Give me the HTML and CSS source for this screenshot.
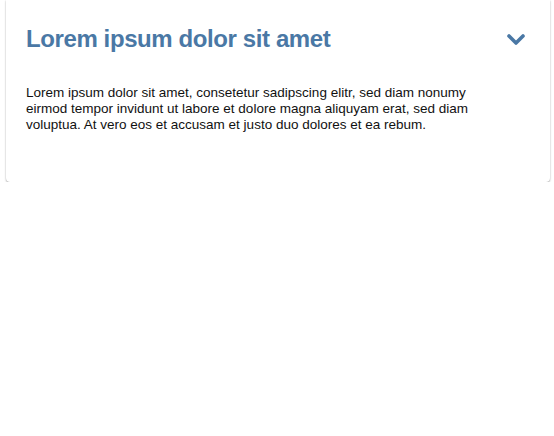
FILE: index.html
```html
<!DOCTYPE html>
<html>
<head>
<meta charset="utf-8">
<link rel="stylesheet" href="styles.css">
</head>
<body>
<div class="page">
  <section class="card">
    <header class="card-header">
      <h2 class="card-title">Lorem ipsum dolor sit amet</h2>
      <svg class="chevron" width="18" height="12" viewBox="0 0 18 12"><path d="M2 2 L9 9 L16 2" fill="none" stroke="#4a78a5" stroke-width="3.6" stroke-linecap="round" stroke-linejoin="round"/></svg>
    </header>
    <div class="card-body">
      <p>Lorem ipsum dolor sit amet, consetetur sadipscing elitr, sed diam nonumy eirmod tempor invidunt ut labore et dolore magna aliquyam erat, sed diam voluptua. At vero eos et accusam et justo duo dolores et ea rebum.</p>
    </div>
  </section>
</div>
</body>
</html>
```
FILE: styles.css
```css
html, body {
  margin: 0;
  padding: 0;
  background: #fff;
}
body {
  font-family: "Liberation Sans", Arial, sans-serif;
}
.page {
  padding: 0 4px 0 6px;
}
.card {
  background: #fff;
  border-radius: 0 0 4px 4px;
  box-shadow: 0 1px 2px rgba(0,0,0,0.3), 0 0 1px rgba(0,0,0,0.2);
  padding: 0 20px;
  height: 182px;
  box-sizing: border-box;
}
.card-header {
  display: flex;
  align-items: center;
  justify-content: space-between;
  padding-top: 24px;
  height: 30px;
}
.card-title {
  margin: 0;
  font-size: 24px;
  font-weight: 600;
  letter-spacing: -0.4px;
  color: #4a78a5;
  line-height: 30px;
}
.chevron {
  margin-right: 5px;
  margin-top: 2px;
}
.card-body {
  padding-top: 31px;
}
.card-body p {
  margin: 0;
  max-width: 470px;
  font-size: 13.5px;
  line-height: 16px;
  color: #111;
}
```
